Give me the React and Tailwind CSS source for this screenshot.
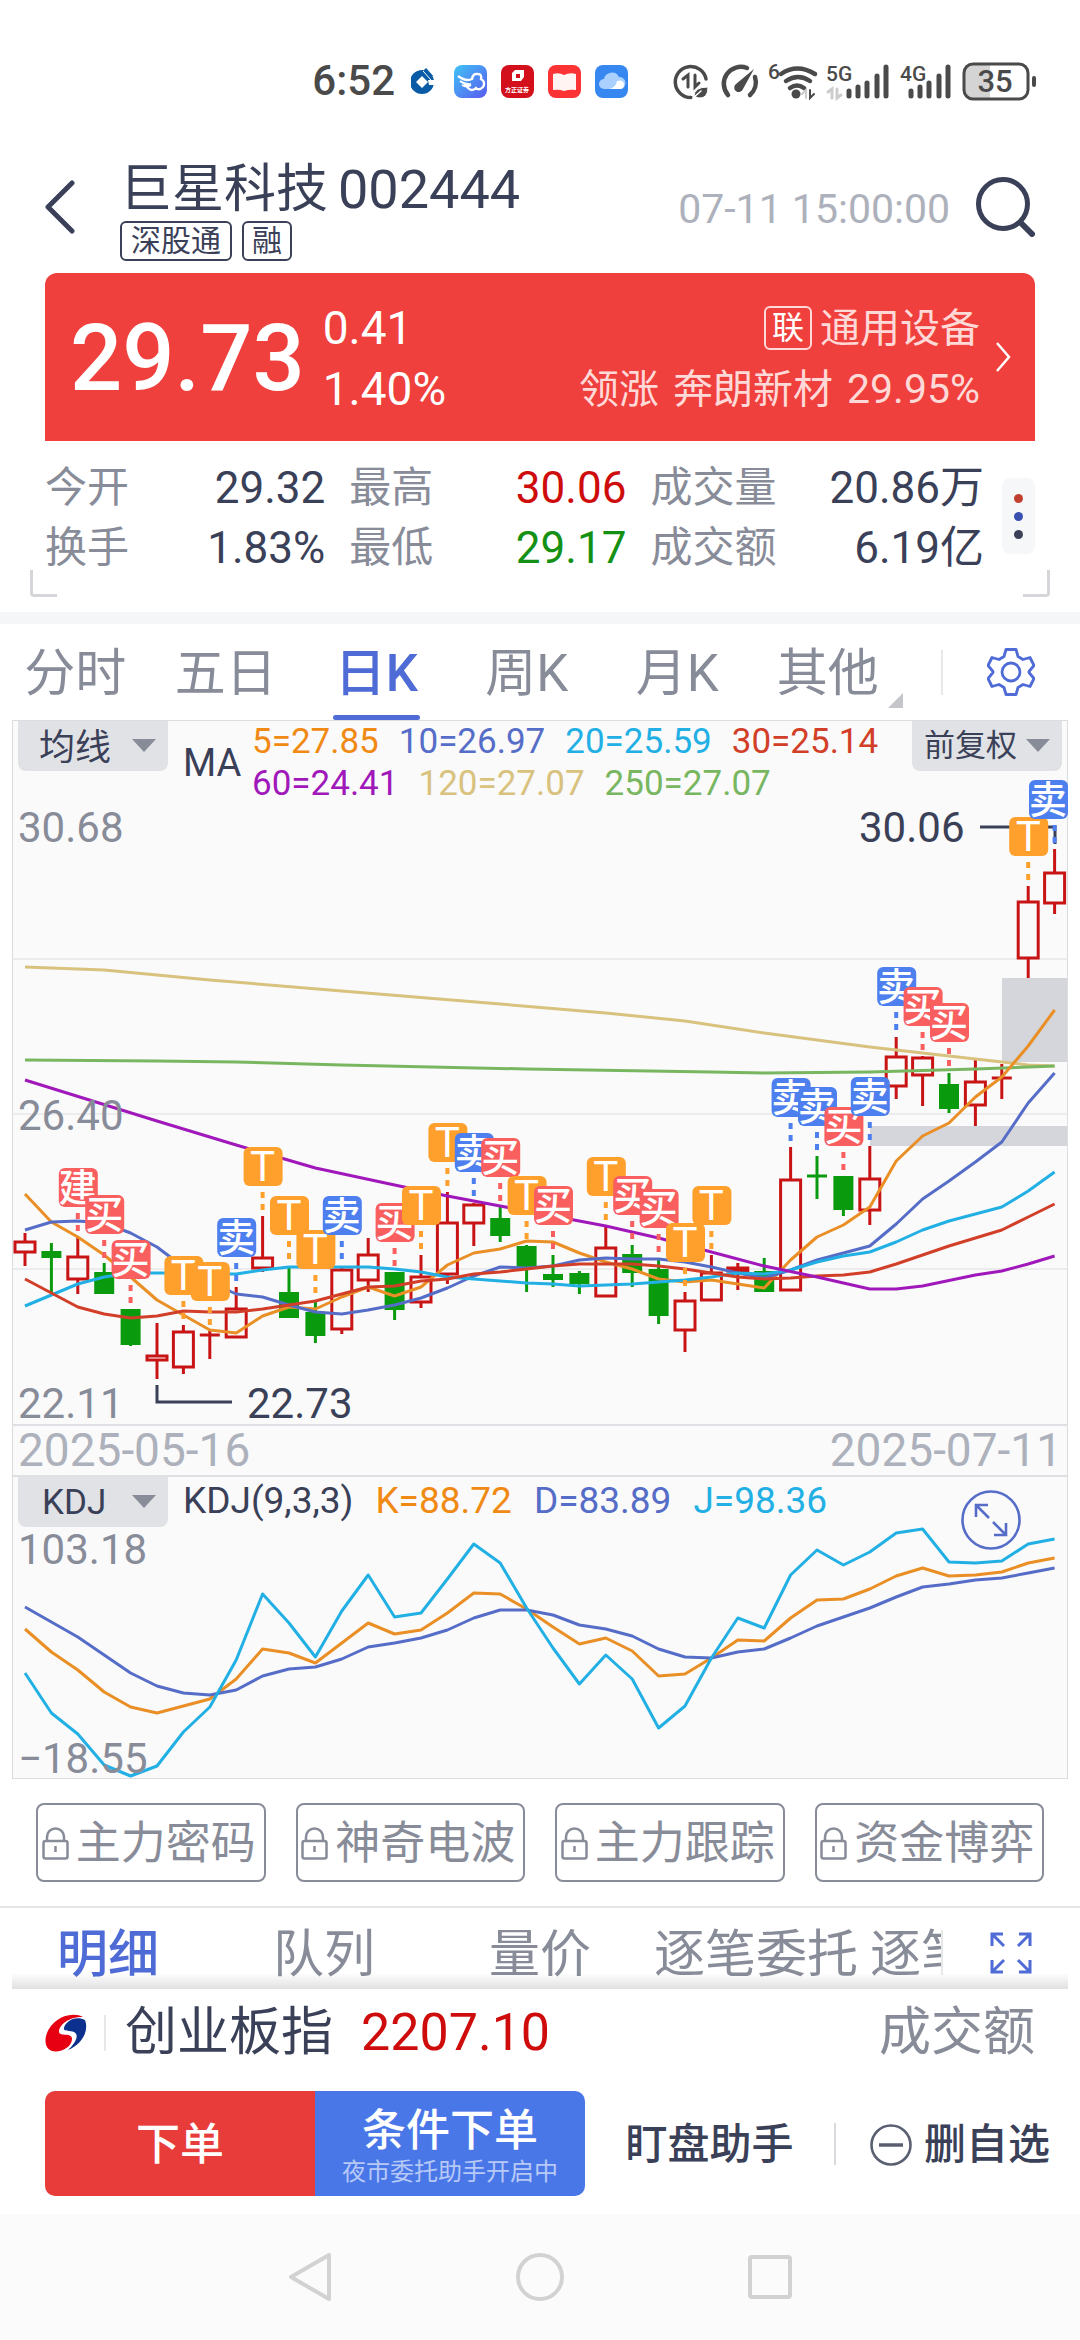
import React from 'react';

const candleX = (i) => 25 + i * 26.4;

// [direction, high, body top, body bottom, low]
const candles = [
    ['up', 1233, 1241, 1253, 1266],
    ['down', 1243, 1251, 1258, 1292],
    ['up', 1237, 1256, 1280, 1294],
    ['down', 1263, 1272, 1294, 1294],
    ['down', 1309, 1309, 1345, 1346],
    ['up', 1323, 1355, 1361, 1379],
    ['up', 1325, 1331, 1368, 1374],
    ['up', 1331, 1335, 1335, 1359],
    ['up', 1287, 1308, 1338, 1338],
    ['up', 1216, 1257, 1269, 1272],
    ['down', 1267, 1292, 1318, 1318],
    ['down', 1302, 1312, 1336, 1343],
    ['up', 1268, 1269, 1330, 1334],
    ['up', 1238, 1254, 1281, 1292],
    ['down', 1272, 1272, 1310, 1320],
    ['up', 1255, 1276, 1303, 1308],
    ['up', 1192, 1222, 1275, 1284],
    ['up', 1203, 1204, 1224, 1246],
    ['down', 1207, 1218, 1236, 1242],
    ['down', 1245, 1246, 1267, 1292],
    ['down', 1255, 1274, 1280, 1287],
    ['down', 1271, 1273, 1284, 1294],
    ['up', 1226, 1247, 1297, 1297],
    ['down', 1245, 1254, 1273, 1287],
    ['down', 1258, 1269, 1316, 1324],
    ['up', 1292, 1300, 1331, 1352],
    ['up', 1255, 1272, 1301, 1301],
    ['up', 1263, 1267, 1272, 1290],
    ['down', 1258, 1271, 1292, 1292],
    ['up', 1147, 1179, 1291, 1291],
    ['down', 1156, 1176, 1176, 1199],
    ['down', 1176, 1176, 1210, 1216],
    ['up', 1146, 1178, 1211, 1225],
    ['up', 1037, 1056, 1087, 1099],
    ['up', 1056, 1057, 1076, 1106],
    ['down', 1073, 1084, 1109, 1113],
    ['up', 1059, 1081, 1106, 1126],
    ['up', 1064, 1078, 1078, 1099],
    ['up', 886, 901, 959, 978],
    ['up', 849, 872, 904, 914],
];

// [candle index, top, label]
const markers = [
    [2, 1168, '建'], [3, 1195, '买'], [4, 1240, '买'], [6, 1256, 'T'], [7, 1262, 'T'],
    [8, 1218, '卖'], [9, 1147, 'T'], [10, 1196, 'T'], [11, 1230, 'T'], [12, 1196, '卖'],
    [14, 1203, '买'], [15, 1186, 'T'], [16, 1123, 'T'], [17, 1133, '卖'], [18, 1138, '买'],
    [19, 1176, 'T'], [20, 1186, '买'], [22, 1157, 'T'], [23, 1176, '买'], [24, 1189, '买'],
    [25, 1223, 'T'], [26, 1186, 'T'], [29, 1078, '卖'], [30, 1087, '卖'], [31, 1107, '买'],
    [32, 1077, '卖'], [33, 967, '卖'], [34, 987, '买'], [35, 1003, '买'], [38, 817, 'T'],
    [39, 780, '卖'],
];

const markerColors = { 建: '#f95f5f', 买: '#f95f5f', 卖: '#4e7fee', T: '#ffa02d' };

const every = (values) => values.map((y, i) => [i, y]);

const maLines = [
    {
        color: '#d8c27e',
        points: [[0, 967], [3, 970], [7, 980], [12, 991], [18, 1004], [22, 1013], [25, 1021], [28, 1033], [32, 1047], [36, 1059], [38, 1065], [39, 1066]],
    },
    {
        color: '#78b660',
        points: [[0, 1060], [5, 1061], [8, 1062], [12, 1065], [19, 1069], [26, 1072], [28, 1073], [32, 1072], [36, 1069], [39, 1066]],
    },
    {
        color: '#e98f25',
        points: every([1194, 1222, 1237, 1255, 1277, 1300, 1315, 1330, 1333, 1316, 1307, 1309, 1297, 1287, 1296, 1287, 1265, 1253, 1249, 1241, 1242, 1253, 1262, 1269, 1279, 1282, 1280, 1284, 1288, 1260, 1237, 1225, 1207, 1161, 1136, 1123, 1097, 1077, 1046, 1010]),
    },
    {
        color: '#566dc8',
        points: every([1230, 1222, 1221, 1223, 1233, 1247, 1267, 1282, 1294, 1297, 1305, 1312, 1314, 1310, 1305, 1298, 1288, 1276, 1267, 1268, 1266, 1260, 1258, 1259, 1259, 1262, 1267, 1273, 1278, 1270, 1260, 1253, 1246, 1224, 1199, 1181, 1162, 1142, 1103, 1073]),
    },
    {
        color: '#22b0e4',
        points: every([1306, 1295, 1284, 1277, 1273, 1273, 1273, 1274, 1274, 1270, 1267, 1267, 1267, 1267, 1269, 1272, 1277, 1279, 1281, 1283, 1284, 1286, 1285, 1284, 1282, 1280, 1277, 1273, 1274, 1270, 1262, 1256, 1252, 1242, 1230, 1221, 1214, 1207, 1191, 1172]),
    },
    {
        color: '#d23f29',
        points: every([1279, 1293, 1307, 1314, 1318, 1316, 1311, 1312, 1312, 1309, 1305, 1301, 1294, 1287, 1286, 1281, 1279, 1274, 1272, 1269, 1266, 1264, 1264, 1264, 1266, 1269, 1273, 1277, 1279, 1278, 1276, 1275, 1272, 1264, 1255, 1246, 1238, 1230, 1217, 1204]),
    },
    {
        color: '#a018ba',
        points: [[0, 1080], [5, 1121], [8, 1145], [11, 1168], [14, 1185], [16, 1196], [18, 1206], [20, 1216], [22, 1226], [24, 1238], [26, 1252], [28, 1266], [30, 1277], [32, 1289], [33, 1289], [34, 1286], [36, 1275], [37, 1271], [38, 1264], [39, 1256]],
    },
];

const kdjLines = [
    {
        color: '#e98f25',
        points: every([1629, 1652, 1670, 1692, 1707, 1713, 1706, 1699, 1679, 1649, 1653, 1663, 1643, 1623, 1634, 1630, 1613, 1593, 1594, 1609, 1627, 1644, 1638, 1651, 1676, 1674, 1658, 1640, 1641, 1618, 1600, 1599, 1589, 1576, 1568, 1576, 1575, 1572, 1563, 1558]),
    },
    {
        color: '#566dc8',
        points: every([1607, 1622, 1637, 1655, 1673, 1686, 1693, 1695, 1690, 1676, 1669, 1667, 1659, 1647, 1643, 1638, 1630, 1618, 1610, 1610, 1615, 1625, 1629, 1636, 1649, 1657, 1658, 1652, 1649, 1638, 1626, 1617, 1608, 1597, 1587, 1584, 1580, 1578, 1573, 1568]),
    },
    {
        color: '#22b0e4',
        points: every([1673, 1713, 1734, 1765, 1776, 1766, 1732, 1707, 1660, 1594, 1623, 1657, 1611, 1575, 1617, 1613, 1579, 1544, 1563, 1608, 1648, 1684, 1655, 1679, 1728, 1706, 1658, 1618, 1628, 1575, 1550, 1565, 1552, 1533, 1529, 1562, 1563, 1561, 1544, 1539]),
    },
];

const Line = ({ color, points }) => (
    <polyline
        points={points.map(([i, y]) => `${candleX(i)},${y}`).join(' ')}
        fill="none"
        stroke={color}
        strokeWidth="3"
        strokeLinejoin="round"
    />
);

const Candle = ({ x, candle }) => {
    const [direction, high, top, bottom, low] = candle;
    const color = direction === 'up' ? '#c81414' : '#0a9a0d';
    return (
        <g stroke={color} strokeWidth="3">
            <path d={`M${x} ${high}V${top}M${x} ${bottom}V${low}`} />
            {top === bottom && <path d={`M${x - 10} ${top}h20`} />}
            {top !== bottom && direction === 'up' && (
                <rect x={x - 10} y={top + 1} width="20" height={bottom - top - 2} fill="none" />
            )}
            {top !== bottom && direction === 'down' && (
                <rect x={x - 10} y={top} width="20" height={bottom - top} fill={color} stroke="none" />
            )}
        </g>
    );
};

const Marker = ({ index, top, label }) => {
    const x = candleX(index);
    const center = Math.min(x, 1048);
    const color = markerColors[label];
    return (
        <g>
            <path d={`M${x} ${top + 45}v6m0 6v6`} stroke={color} strokeWidth="4" />
            <rect x={center - 19} y={top} width="39" height="39" rx="6" fill={color} />
            <text x={center} y={top + (label === 'T' ? 34 : 33)} textAnchor="middle" fontSize={label === 'T' ? 42 : 38} fontWeight={label === 'T' ? 400 : 500} fill="#fff">
                {label}
            </text>
        </g>
    );
};

const CandleChart = () => (
    <svg viewBox="13 804 1054 620" className="block w-full overflow-visible">
        <path d="M13 959h1054M13 1114h1054M13 1269h1054" stroke="#ececee" strokeWidth="2" />
        <rect x="1002" y="978" width="65" height="84" fill="#d5d6db" />
        <rect x="870" y="1126" width="197" height="20" fill="#d5d6db" />
        <path d="M980 827h75v17" fill="none" stroke="#3a4057" strokeWidth="3" />
        <path d="M157 1385v17h75" fill="none" stroke="#3a4057" strokeWidth="3" />
        {candles.map((candle, i) => (
            <Candle key={i} x={candleX(i)} candle={candle} />
        ))}
        {maLines.map((line) => (
            <Line key={line.color} {...line} />
        ))}
        {markers.map(([index, top, label]) => (
            <Marker key={index} index={index} top={top} label={label} />
        ))}
        <g fontSize="42" fill="#888c99">
            <text x="18" y="842">30.68</text>
            <text x="18" y="1130">26.40</text>
            <text x="18" y="1418">22.11</text>
        </g>
        <g fontSize="42" fill="#3a4057">
            <text x="859" y="842">30.06</text>
            <text x="247" y="1418">22.73</text>
        </g>
    </svg>
);

const KdjChart = () => (
    <svg viewBox="13 1526 1054 252" className="block w-full">
        {kdjLines.map((line) => (
            <Line key={line.color} {...line} />
        ))}
        <g fontSize="42" fill="#888c99">
            <text x="18" y="1564">103.18</text>
            <text x="18" y="1773">−18.55</text>
        </g>
    </svg>
);

const StatusIcons = () => (
    <svg viewBox="0 0 390 60" className="h-[60px] w-[390px]" fill="none" stroke="#4a4a4a" strokeWidth="3.4" strokeLinecap="round">
        {/* power saving */}
        <path d="M46 28A15.500 15.500 0 1 0 31 46.500" strokeWidth="3.500" />
        <path d="M23 28l5-4v12M35 24v12l4-4" strokeWidth="3" />
        <path d="M34 45q0-9 14-9q0 12-9 11z" fill="#4a4a4a" stroke="#fff" strokeWidth="1" />
        <path d="M33 47l8-7" stroke="#fff" strokeWidth="1.500" />
        {/* gauge */}
        <path d="M68 44A17 17 0 0 1 87 17M95 26A17 17 0 0 1 90 44" strokeWidth="4.500" />
        <path d="M94 18L76 33a4.500 4.500 0 1 0 7 5z" fill="#4a4a4a" stroke="none" />
        {/* wifi */}
        <text x="108" y="28" fontSize="21" fontWeight="500" fill="#4a4a4a" stroke="none">6</text>
        <path d="M121 23q16-11 34 0M126 30q12-8 24 0M130 37q7-5 14 0" strokeWidth="4.500" />
        <circle cx="136" cy="43" r="4.500" fill="#4a4a4a" stroke="none" />
        <path d="M142 43l4-4v8" stroke="#ccc" strokeWidth="2" />
        <path d="M150 39v8l4-4" strokeWidth="2" />
        {/* signals */}
        <text x="166" y="30" fontSize="21" fontWeight="500" fill="#4a4a4a" stroke="none">5G</text>
        <path d="M168 41l4-3v9M177 38v9l4-3" stroke="#ccc" strokeWidth="3" />
        <path d="M189 40v5M198 36v9M207 32v13M217 25v20M226 16v29" strokeWidth="5" />
        <text x="240" y="30" fontSize="21" fontWeight="500" fill="#4a4a4a" stroke="none">4G</text>
        <path d="M251 40v5M260 36v9M269 32v13M279 25v20M288 16v29" strokeWidth="5" />
        {/* battery */}
        <path d="M313 14h17v33h-17q-8 0-8-8v-17q0-8 8-8z" fill="#d4d4d4" stroke="none" />
        <rect x="304" y="13" width="64" height="35" rx="9" strokeWidth="3" />
        <path d="M374 27v7" strokeWidth="4" />
        <text x="335" y="41" textAnchor="middle" fontSize="31" fontWeight="500" fill="#4a4a4a" stroke="none">35</text>
    </svg>
);

const AppIcons = () => (
    <svg viewBox="0 0 218 33" className="h-[33px] w-[218px]">
        <defs>
            <linearGradient id="bird" x1="0" y1="0" x2="1" y2="1">
                <stop offset="0" stopColor="#3ec3f5" />
                <stop offset="1" stopColor="#5b5af0" />
            </linearGradient>
        </defs>
        <circle cx="11" cy="17" r="12" fill="#0a5ba6" />
        <path d="M11 11l6 6-6 6-6-6zM17 15h8v5h-7z" fill="#fff" />
        <path d="M15 4l7 8M12 6l8 9" stroke="#fff" strokeWidth="1" />
        <path d="M14 4l7 8" stroke="#0a5ba6" strokeWidth="3" />
        <rect x="43" width="33" height="33" rx="8" fill="url(#bird)" />
        <path d="M47 11q8 6 14 3q1-6 6-5q4 0 3 5q5 3 2 8q-4 4-7 1q-4 4-8 0q-1-3-4-3" fill="none" stroke="#fff" strokeWidth="2.400" />
        <path d="M49 16q5 4 11 3M51 20q5 3 9 0" fill="none" stroke="#fff" strokeWidth="2" />
        <rect x="90" width="33" height="33" rx="8" fill="#d20f1b" />
        <path d="M101 8l3-3h9v7l-3 4h-9zM105 9v4h4v-4z" fill="#fff" fillRule="evenodd" />
        <text x="106" y="27" textAnchor="middle" fontSize="6" fontWeight="700" fill="#fff">方正证券</text>
        <rect x="137" width="33" height="33" rx="8" fill="#fb3335" />
        <path d="M142 9q6-2 11 1q6-3 12-1v16q-6-1-12 1q-5-2-11-1z" fill="#fff4f2" />
        <rect x="184" width="33" height="33" rx="8" fill="#3787f0" />
        <path d="M193 24a5 5 0 0 1 0-10a8 8 0 0 1 15-2a6 6 0 0 1 1 12z" fill="#a9d0ff" />
        <path d="M199 24q6-2 7-8q7-2 7 4q0 4-4 4z" fill="#fff" />
    </svg>
);

const Stat = ({ label, value, valueClass = 'text-[#3a4057]' }) => (
    <div className="flex justify-between text-[42px] leading-[60px]">
        <dt className="text-[#888c99]">{label}</dt>
        <dd className={`text-[44px] ${valueClass}`}>{value}</dd>
    </div>
);

const Dropdown = ({ label, option, selectClass }) => (
    <label className="relative block h-[50px] w-[150px] shrink-0">
        <span className="sr-only">{label}</span>
        <select className={`h-full w-full appearance-none rounded-b-lg bg-[#e0e2e6] text-[#3a4057] ${selectClass}`}>
            <option>{option}</option>
        </select>
        <svg viewBox="0 0 24 13" className="pointer-events-none absolute top-[18px] right-3 h-[13px] w-6">
            <path d="M0 0h24L12 13z" fill="#888c99" />
        </svg>
    </label>
);

const periods = ['分时', '五日', '日K', '周K', '月K', '其他'];
const tools = ['主力密码', '神奇电波', '主力跟踪', '资金博弈'];
const details = ['明细', '队列', '量价', '逐笔委托', '逐笔成交'];

const App = () => {
    return (
        <div className="min-h-screen bg-white font-['Roboto','Noto_Sans_CJK_SC',sans-serif] text-[#3a4057]">
            <div className="flex h-[162px] items-center justify-end pr-[30px] text-[#4a4a4a]">
                <span className="mr-4 text-[42px] leading-[50px] font-medium">6:52</span>
                <AppIcons />
                <span className="w-[31px]" />
                <StatusIcons />
            </div>

            <header className="flex items-start px-[45px] pb-3">
                <button aria-label="返回" className="w-[75px] pt-[18px]">
                    <svg viewBox="0 0 30 54" className="h-[54px] w-[30px]" fill="none" stroke="#3a4057" strokeWidth="5" strokeLinecap="round" strokeLinejoin="round">
                        <path d="M27 3L3 27l24 24" />
                    </svg>
                </button>
                <div>
                    <h1 className="flex gap-[10px] pt-[3px] text-[52px] leading-[50px]">
                        <span>巨星科技</span>
                        <span className="text-[54px]">002444</span>
                    </h1>
                    <div className="mt-[6px] flex gap-[10px] text-[30px] leading-9">
                        <span className="rounded-md border-2 border-[#3a4057] px-[9px]">深股通</span>
                        <span className="rounded-md border-2 border-[#3a4057] px-2">融</span>
                    </div>
                </div>
                <time className="ml-auto pt-6 text-[41px] leading-[46px] text-[#adb1bb]">07-11 15:00:00</time>
                <button aria-label="搜索" className="ml-[25px] pt-[15px]">
                    <svg viewBox="0 0 60 60" className="h-[60px] w-[60px]" fill="none" stroke="#3a4057" strokeWidth="5" strokeLinecap="round">
                        <circle cx="28" cy="27" r="24.500" />
                        <path d="M46 46l11 11" strokeWidth="6" />
                    </svg>
                </button>
            </header>

            <section className="mx-[45px] flex h-[168px] items-center rounded-t-xl bg-[#ef403d] pr-6 pl-[25px] text-white">
                <strong className="pt-1 text-[92px] leading-[100px] font-medium">29.73</strong>
                <div className="ml-[18px] pt-[3px] text-[46px] leading-[61px]">
                    <p>0.41</p>
                    <p>1.40%</p>
                </div>
                <div className="ml-auto pt-[3px] text-[40px] leading-[61px] text-[#ffd9d8]">
                    <p className="flex items-center justify-end gap-2">
                        <span className="rounded-md border-2 border-[#ffd9d8] px-[6px] text-[32px] leading-10 text-white">联</span>
                        通用设备
                    </p>
                    <p className="flex gap-[14px]">
                        <span>领涨</span>
                        <span>奔朗新材</span>
                        <span className="text-[41px]">29.95%</span>
                    </p>
                </div>
                <button aria-label="板块详情" className="ml-4">
                    <svg viewBox="0 0 15 30" className="h-[30px] w-[15px]" fill="none" stroke="#fff" strokeWidth="2.500">
                        <path d="M1 1l12 14L1 29" />
                    </svg>
                </button>
            </section>

            <section className="flex items-start px-[45px] pt-[17px]">
                <dl className="grid grow grid-cols-[278fr_275fr_331fr] gap-x-6">
                    <Stat label="今开" value="29.32" />
                    <Stat label="最高" value="30.06" valueClass="text-[#cf0c0c]" />
                    <Stat label="成交量" value="20.86万" />
                    <Stat label="换手" value="1.83%" />
                    <Stat label="最低" value="29.17" valueClass="text-[#149114]" />
                    <Stat label="成交额" value="6.19亿" />
                </dl>
                <button aria-label="更多行情" className="mt-5 ml-[18px] flex h-[76px] w-[33px] shrink-0 flex-col items-center justify-center gap-[9px] rounded-lg bg-[#f5f7f9]">
                    <i className="size-[9px] rounded-full bg-[#c2402f]" />
                    <i className="size-[9px] rounded-full bg-[#3a50b0]" />
                    <i className="size-[9px] rounded-full bg-[#3a4057]" />
                </button>
            </section>
            <div className="-mt-2 flex justify-between px-[30px] pb-[15px]">
                <span className="h-[27px] w-[27px] rounded-bl-sm border-b-3 border-l-3 border-[#d5d6da]" />
                <span className="h-[27px] w-[27px] rounded-br-sm border-r-3 border-b-3 border-[#d5d6da]" />
            </div>
            <div className="h-3 bg-[#f5f6f8]" />

            <nav className="flex h-24 items-stretch pr-[45px]">
                <div className="grid grow grid-cols-6">
                    {periods.map((period) => (
                        <button
                            key={period}
                            className={`relative pt-1 text-[51px] leading-[60px] ${period === '日K' ? 'font-medium text-[#4f6bd6]' : 'text-[#888c99]'}`}
                        >
                            {period}
                            {period === '日K' && <span className="absolute inset-x-8 bottom-0 h-[5px] rounded-sm bg-[#4f6bd6]" />}
                            {period === '其他' && (
                                <svg viewBox="0 0 15 15" className="absolute right-0 bottom-3 h-[15px] w-[15px]">
                                    <path d="M15 0v15H0z" fill="#c5c6ca" />
                                </svg>
                            )}
                        </button>
                    ))}
                </div>
                <span className="ml-[38px] h-[45px] w-[2px] self-center bg-[#e7e8ea]" />
                <button aria-label="设置" className="ml-11">
                    <svg viewBox="0 0 48 48" className="h-12 w-12" fill="none" stroke="#4f6bd6" strokeWidth="2.800" strokeLinejoin="round">
                        <path d="M19 1.500h10l2 7 5 3 7-2 4 8-5 6 0 1 5 6-4 8-7-2-5 3-2 7H19l-2-7-5-3-7 2-4-8 5-6 0-1-5-6 4-8 7 2 5-3z" />
                        <circle cx="24" cy="24" r="9" />
                    </svg>
                </button>
            </nav>

            <section className="mx-3 border border-[#dcdde1] bg-[#fafafb]">
                <div className="flex h-[83px] items-start px-[5px]">
                    <Dropdown label="主图指标" option="均线" selectClass="pl-[21px] text-[36px]" />
                    <span className="ml-[15px] w-[69px] self-center text-[38px] leading-[44px]">MA</span>
                    <div className="grow text-[35px] leading-[42px]">
                        <p className="flex gap-5">
                            <span className="text-[#f08a14]">5=27.85</span>
                            <span className="text-[#566dc8]">10=26.97</span>
                            <span className="text-[#22b0e4]">20=25.59</span>
                            <span className="text-[#d23f29]">30=25.14</span>
                        </p>
                        <p className="flex gap-5">
                            <span className="text-[#a018ba]">60=24.41</span>
                            <span className="text-[#d8c27e]">120=27.07</span>
                            <span className="text-[#78b660]">250=27.07</span>
                        </p>
                    </div>
                    <Dropdown label="复权方式" option="前复权" selectClass="pl-3 text-[31px]" />
                </div>
                <CandleChart />
                <div className="flex h-[51px] items-center justify-between border-t-2 border-[#dfe0e3] px-[5px] text-[46px] leading-[49px] text-[#adb1bb]">
                    <time>2025-05-16</time>
                    <time>2025-07-11</time>
                </div>
                <div className="relative border-t-2 border-[#dfe0e3]">
                    <div className="flex h-[49px] items-start px-[5px]">
                        <Dropdown label="副图指标" option="KDJ" selectClass="pl-6 text-[35px]" />
                        <p className="ml-[15px] flex gap-[22px] text-[37px] leading-[47px]">
                            <span>KDJ(9,3,3)</span>
                            <span className="text-[#f08a14]">K=88.72</span>
                            <span className="text-[#566dc8]">D=83.89</span>
                            <span className="text-[#22b0e4]">J=98.36</span>
                        </p>
                    </div>
                    <KdjChart />
                    <button aria-label="放大" className="absolute top-[13px] right-[46px]">
                        <svg viewBox="0 0 60 60" className="h-[60px] w-[60px]" fill="none" stroke="#566dc8" strokeWidth="2.600">
                            <circle cx="30" cy="30" r="28.500" />
                            <path d="M15 27V15h12M15 15l13 13M45 33v12H33M45 45L32 32" />
                        </svg>
                    </button>
                </div>
            </section>

            <div className="grid grid-cols-4 gap-[30px] px-9 pt-6 pb-6">
                {tools.map((tool) => (
                    <button key={tool} className="flex h-[79px] items-center justify-center gap-[7px] rounded-lg border-2 border-[#888c99] pt-[2px] pr-1 text-[45px] leading-[60px] whitespace-nowrap text-[#888c99]">
                        <svg viewBox="0 0 27 33" className="h-[33px] w-[27px] shrink-0" fill="none" stroke="#888c99" strokeWidth="2.500">
                            <rect x="1.500" y="14" width="24" height="17.500" rx="2" />
                            <path d="M5 14V10a8.500 8.500 0 0 1 17 0v4M13.500 19v6" />
                        </svg>
                        {tool}
                    </button>
                ))}
            </div>

            <nav className="flex h-[83px] border-t-2 border-[#e6e6e8] pt-[14px]">
                <div className="flex min-w-0 flex-1 overflow-hidden">
                    {details.map((detail) => (
                        <button
                            key={detail}
                            className={`w-[216px] shrink-0 self-start text-[51px] leading-[66px] ${detail === '明细' ? 'font-medium text-[#4f6bd6]' : 'text-[#888c99]'}`}
                        >
                            {detail}
                        </button>
                    ))}
                </div>
                <span className="mt-2 h-[45px] w-[2px] bg-[#e7e8ea]" />
                <button aria-label="全屏" className="mr-12 ml-[47px] self-start pt-[10px]">
                    <svg viewBox="0 0 42 42" className="h-[42px] w-[42px]" fill="none" stroke="#4f6bd6" strokeWidth="3">
                        <path d="M2 14V2h11M2 2l12 12M29 2h11v12M40 2L28 14M2 28v12h11M2 40l12-12M40 28v12H29M40 40L28 28" />
                    </svg>
                </button>
            </nav>

            <footer className="relative bg-white">
                <div className="absolute inset-x-3 -top-4 h-4 bg-linear-to-t from-black/12 to-transparent" />
                <div className="flex h-[102px] items-center px-[45px] pb-[14px] text-[52px] leading-[70px]">
                    <svg viewBox="0 0 42 40" className="h-10 w-[42px]">
                        <path d="M38 4C30-1 14 2 6 13C-2 23-1 36 7 38c9 2 20-4 20-12c0-7-12-2-13-7c0-7 9-15 24-15z" fill="#e60012" />
                        <path d="M40 7c4 10-2 24-17 30c7-6 12-15 6-18c-4-2-11 0-10-4c1-6 11-13 21-8z" fill="#0b308e" />
                    </svg>
                    <span className="mr-[19px] ml-[17px] h-9 w-[2px] bg-[#e7e8ea]" />
                    <span>创业板指</span>
                    <span className="ml-7 text-[#cf0c0c]">2207.10</span>
                    <span className="ml-auto text-[#888c99]">成交额</span>
                </div>
                <div className="flex items-center pr-[30px] pb-[18px] pl-[45px] font-medium">
                    <div className="flex h-[105px] w-[540px] shrink-0 overflow-hidden rounded-[10px] text-white">
                        <button className="flex-1 bg-[#e73c3a] pt-[2px] text-[44px] leading-[60px]">下单</button>
                        <button className="flex-1 bg-[#4a77e8] pt-[6px]">
                            <span className="block text-[44px] leading-[50px]">条件下单</span>
                            <span className="block text-[24px] leading-[32px] font-normal text-[#b7c9f6]">夜市委托助手开启中</span>
                        </button>
                    </div>
                    <button className="flex-1 pt-[2px] text-[42px] leading-[60px] whitespace-nowrap">盯盘助手</button>
                    <span className="h-[42px] w-[2px] bg-[#d9dadd]" />
                    <button className="ml-[34px] flex items-center gap-3 pt-[2px] text-[42px] leading-[60px] whitespace-nowrap">
                        <svg viewBox="0 0 42 42" className="h-[42px] w-[42px]" fill="none" stroke="#5a6072" strokeWidth="2.600">
                            <circle cx="21" cy="21" r="19.500" />
                            <path d="M9 21h24" strokeWidth="3.500" />
                        </svg>
                        删自选
                    </button>
                </div>
            </footer>

            <div className="flex h-[126px] items-center justify-center gap-[182px] bg-[#fbfbfc]">
                <button aria-label="系统返回">
                    <svg viewBox="0 0 48 48" className="h-12 w-12" fill="none" stroke="#d2d2d2" strokeWidth="4" strokeLinejoin="round">
                        <path d="M43 2v44L5 24z" />
                    </svg>
                </button>
                <button aria-label="主屏幕">
                    <svg viewBox="0 0 48 48" className="h-12 w-12" fill="none" stroke="#d2d2d2" strokeWidth="4">
                        <circle cx="24" cy="24" r="22" />
                    </svg>
                </button>
                <button aria-label="最近任务">
                    <svg viewBox="0 0 48 48" className="h-12 w-12" fill="none" stroke="#d2d2d2" strokeWidth="4">
                        <rect x="4" y="4" width="40" height="40" rx="2" />
                    </svg>
                </button>
            </div>
        </div>
    );
};

export default App;
